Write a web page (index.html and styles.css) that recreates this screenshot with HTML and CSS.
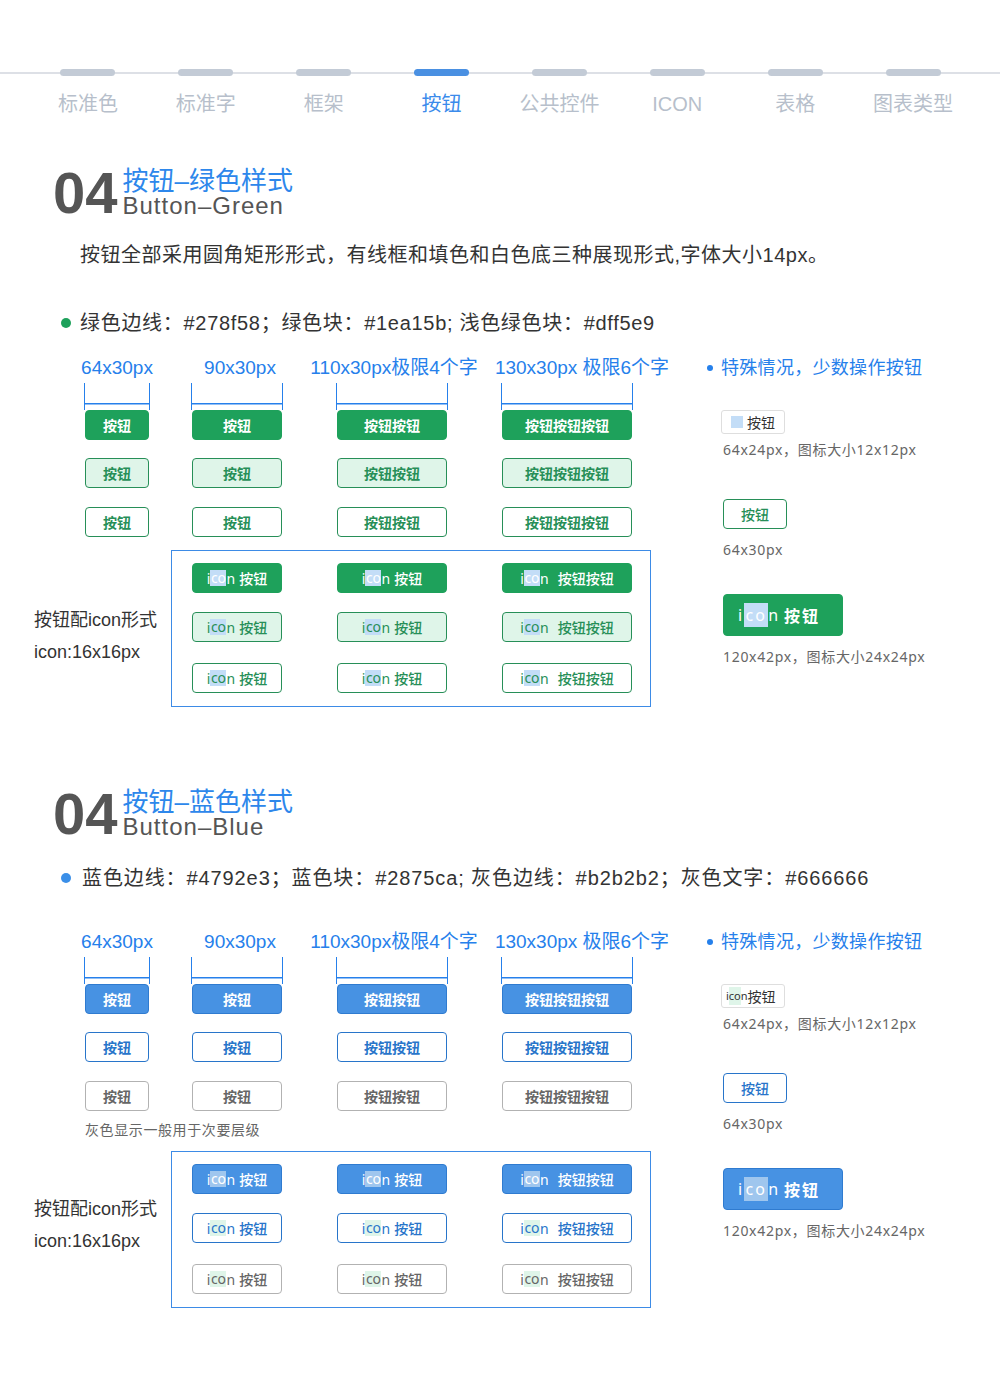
FILE: index.html
```html
<!DOCTYPE html>
<html lang="zh-CN">
<head>
<meta charset="utf-8">
<title>按钮</title>
<link rel="stylesheet" href="styles.css">
</head>
<body>
<div class="topbar">
  <nav class="nav">
    <div class="nav-item"><span class="pill"></span><span class="nav-label">标准色</span></div>
    <div class="nav-item"><span class="pill"></span><span class="nav-label">标准字</span></div>
    <div class="nav-item"><span class="pill"></span><span class="nav-label">框架</span></div>
    <div class="nav-item active"><span class="pill"></span><span class="nav-label">按钮</span></div>
    <div class="nav-item"><span class="pill"></span><span class="nav-label">公共控件</span></div>
    <div class="nav-item"><span class="pill"></span><span class="nav-label">ICON</span></div>
    <div class="nav-item"><span class="pill"></span><span class="nav-label">表格</span></div>
    <div class="nav-item"><span class="pill"></span><span class="nav-label">图表类型</span></div>
  </nav>
</div>

<section class="sec sec-green">
  <header class="sec-head">
    <div class="sec-num">04</div>
    <div class="sec-titles">
      <div class="sec-cn">按钮–绿色样式</div>
      <div class="sec-en">Button–Green</div>
    </div>
  </header>
  <p class="intro">按钮全部采用圆角矩形形式，有线框和填色和白色底三种展现形式,字体大小14px。</p>
  <p class="legend"><span class="dot"></span>绿色边线：#278f58；绿色块：#1ea15b; 浅色绿色块：#dff5e9</p>

  <div class="spec">
    <div class="spec-main">
      <div class="cols">
        <div class="col w64">
          <div class="size-label">64x30px</div>
          <div class="bracket"></div>
          <div class="btn g-fill">按钮</div>
          <div class="btn g-light">按钮</div>
          <div class="btn g-line">按钮</div>
        </div>
        <div class="col w90">
          <div class="size-label shift-s">90x30px</div>
          <div class="bracket"></div>
          <div class="btn g-fill">按钮</div>
          <div class="btn g-light">按钮</div>
          <div class="btn g-line">按钮</div>
        </div>
        <div class="col w110">
          <div class="size-label shift-m">110x30px极限4个字</div>
          <div class="bracket"></div>
          <div class="btn g-fill">按钮按钮</div>
          <div class="btn g-light">按钮按钮</div>
          <div class="btn g-line">按钮按钮</div>
        </div>
        <div class="col w130">
          <div class="size-label shift-l">130x30px 极限6个字</div>
          <div class="bracket"></div>
          <div class="btn g-fill">按钮按钮按钮</div>
          <div class="btn g-light">按钮按钮按钮</div>
          <div class="btn g-line">按钮按钮按钮</div>
        </div>
      </div>

      <div class="icon-row">
        <div class="icon-note note-g">按钮配icon形式<br>icon:16x16px</div>
        <div class="icon-box">
          <div class="irow">
            <div class="btn ibtn g-fill"><span class="iw">i<span class="ico ico-blue">co</span>n</span>按钮</div>
            <div class="btn ibtn g-fill"><span class="iw">i<span class="ico ico-blue">co</span>n</span>按钮</div>
            <div class="btn ibtn g-fill"><span class="iw wide">i<span class="ico ico-blue">co</span>n</span>按钮按钮</div>
          </div>
          <div class="irow">
            <div class="btn ibtn g-light"><span class="iw">i<span class="ico ico-blue">co</span>n</span>按钮</div>
            <div class="btn ibtn g-light"><span class="iw">i<span class="ico ico-blue">co</span>n</span>按钮</div>
            <div class="btn ibtn g-light"><span class="iw wide">i<span class="ico ico-blue">co</span>n</span>按钮按钮</div>
          </div>
          <div class="irow">
            <div class="btn ibtn g-line"><span class="iw">i<span class="ico ico-blue">co</span>n</span>按钮</div>
            <div class="btn ibtn g-line"><span class="iw">i<span class="ico ico-blue">co</span>n</span>按钮</div>
            <div class="btn ibtn g-line"><span class="iw wide">i<span class="ico ico-blue">co</span>n</span>按钮按钮</div>
          </div>
        </div>
      </div>
    </div>

    <aside class="spec-side">
      <div class="side-head"><span class="side-dot"></span>特殊情况，少数操作按钮</div>
      <div class="mini"><span class="mini-sq"></span>按钮</div>
      <div class="side-desc">64x24px，图标大小12x12px</div>
      <div class="btn g-line side-btn">按钮</div>
      <div class="side-desc">64x30px</div>
      <div class="btn g-fill big"><span class="iw">i<span class="ico ico-lg ico-blue">co</span>n</span>按钮</div>
      <div class="side-desc">120x42px，图标大小24x24px</div>
    </aside>
  </div>
</section>

<section class="sec sec-blue">
  <header class="sec-head">
    <div class="sec-num">04</div>
    <div class="sec-titles">
      <div class="sec-cn">按钮–蓝色样式</div>
      <div class="sec-en">Button–Blue</div>
    </div>
  </header>
  <p class="legend"><span class="dot"></span>蓝色边线：#4792e3；蓝色块：#2875ca; 灰色边线：#b2b2b2；灰色文字：#666666</p>

  <div class="spec">
    <div class="spec-main">
      <div class="cols">
        <div class="col w64">
          <div class="size-label">64x30px</div>
          <div class="bracket"></div>
          <div class="btn b-fill">按钮</div>
          <div class="btn b-line">按钮</div>
          <div class="btn gr-line">按钮</div>
        </div>
        <div class="col w90">
          <div class="size-label shift-s">90x30px</div>
          <div class="bracket"></div>
          <div class="btn b-fill">按钮</div>
          <div class="btn b-line">按钮</div>
          <div class="btn gr-line">按钮</div>
        </div>
        <div class="col w110">
          <div class="size-label shift-m">110x30px极限4个字</div>
          <div class="bracket"></div>
          <div class="btn b-fill">按钮按钮</div>
          <div class="btn b-line">按钮按钮</div>
          <div class="btn gr-line">按钮按钮</div>
        </div>
        <div class="col w130">
          <div class="size-label shift-l">130x30px 极限6个字</div>
          <div class="bracket"></div>
          <div class="btn b-fill">按钮按钮按钮</div>
          <div class="btn b-line">按钮按钮按钮</div>
          <div class="btn gr-line">按钮按钮按钮</div>
        </div>
      </div>
      <p class="gray-note">灰色显示一般用于次要层级</p>

      <div class="icon-row">
        <div class="icon-note note-b">按钮配icon形式<br>icon:16x16px</div>
        <div class="icon-box">
          <div class="irow">
            <div class="btn ibtn b-fill"><span class="iw">i<span class="ico ico-dblue">co</span>n</span>按钮</div>
            <div class="btn ibtn b-fill"><span class="iw">i<span class="ico ico-dblue">co</span>n</span>按钮</div>
            <div class="btn ibtn b-fill"><span class="iw wide">i<span class="ico ico-dblue">co</span>n</span>按钮按钮</div>
          </div>
          <div class="irow">
            <div class="btn ibtn b-line"><span class="iw">i<span class="ico ico-green">co</span>n</span>按钮</div>
            <div class="btn ibtn b-line"><span class="iw">i<span class="ico ico-green">co</span>n</span>按钮</div>
            <div class="btn ibtn b-line"><span class="iw wide">i<span class="ico ico-green">co</span>n</span>按钮按钮</div>
          </div>
          <div class="irow">
            <div class="btn ibtn gr-line"><span class="iw">i<span class="ico ico-green">co</span>n</span>按钮</div>
            <div class="btn ibtn gr-line"><span class="iw">i<span class="ico ico-green">co</span>n</span>按钮</div>
            <div class="btn ibtn gr-line"><span class="iw wide">i<span class="ico ico-green">co</span>n</span>按钮按钮</div>
          </div>
        </div>
      </div>
    </div>

    <aside class="spec-side">
      <div class="side-head"><span class="side-dot"></span>特殊情况，少数操作按钮</div>
      <div class="mini"><span class="mini-icon">i<span class="ico-mini">co</span>n</span>按钮</div>
      <div class="side-desc">64x24px，图标大小12x12px</div>
      <div class="btn b-line side-btn">按钮</div>
      <div class="side-desc">64x30px</div>
      <div class="btn b-fill big"><span class="iw">i<span class="ico ico-lg ico-dblue">co</span>n</span>按钮</div>
      <div class="side-desc">120x42px，图标大小24x24px</div>
    </aside>
  </div>
</section>
</body>
</html>
```

FILE: styles.css
```css
* {
  box-sizing: border-box;
  margin: 0;
  padding: 0;
}

body {
  width: 1000px;
  margin: 0;
  background: #fff;
  color: #333;
  font-family: "Liberation Sans", "Noto Sans CJK SC", sans-serif;
}

/* ---------- top nav ---------- */
.topbar {
  padding: 69px 28px 0 29px;
  background: linear-gradient(#dde0e6, #dde0e6) 0 72px / 100% 2px no-repeat;
}

.nav {
  display: grid;
  grid-template-columns: repeat(8, 1fr);
}

.nav-item {
  display: flex;
  flex-direction: column;
  align-items: center;
}

.pill {
  width: 55px;
  height: 7px;
  border-radius: 4px;
  background: #c3cbd6;
}

.nav-label {
  margin-top: 15px;
  font-size: 20px;
  line-height: 26px;
  color: #b7bfcb;
}

.nav-item.active .pill { background: #4a90e2; }
.nav-item.active .nav-label { color: #3b8beb; }

/* ---------- section header ---------- */
.sec-head {
  display: flex;
  align-items: flex-start;
  margin-left: 53px;
}

.sec-green .sec-head { margin-top: 47px; }
.sec-blue .sec-head { margin-top: 78px; }

.sec-num {
  font-size: 58px;
  line-height: 58px;
  font-weight: bold;
  color: #555;
}

.sec-titles {
  margin-left: 5px;
  margin-top: 4px;
}

.sec-cn {
  font-size: 26px;
  line-height: 26px;
  color: #2d87eb;
}

.sec-en {
  font-size: 24px;
  line-height: 24px;
  color: #555;
  letter-spacing: 1px;
}

.intro {
  margin: 19px 0 0 80px;
  font-size: 20px;
  line-height: 28px;
  color: #333;
  letter-spacing: 0.5px;
}

.legend {
  display: flex;
  align-items: center;
  margin: 40px 0 0 61px;
  font-size: 20px;
  line-height: 28px;
  color: #333;
  letter-spacing: 0.7px;
}

.sec-blue .legend {
  margin-top: 21px;
  letter-spacing: 0.9px;
}

.dot {
  width: 10px;
  height: 10px;
  border-radius: 50%;
  margin-right: 9px;
  background: #1ea15b;
}

.sec-blue .dot {
  background: #3b8fe8;
  margin-right: 11px;
}

/* ---------- spec area ---------- */
.spec {
  display: flex;
  margin-top: 19px;
}

.sec-blue .spec { margin-top: 38px; }

.spec-main {
  width: 700px;
  flex: none;
}

.cols {
  display: flex;
  padding-left: 85px;
}

.col {
  display: flex;
  flex-direction: column;
  align-items: center;
  flex: none;
}

.w64 { width: 64px; }
.w90 { width: 90px; margin-left: 43px; }
.w110 { width: 110px; margin-left: 55px; }
.w130 { width: 130px; margin-left: 55px; }

.size-label {
  font-size: 19px;
  line-height: 24px;
  color: #2680eb;
  white-space: nowrap;
}

.shift-s { margin-left: 6px; }
.shift-m { margin-left: 4px; }
.shift-l { margin-left: 30px; }

.bracket {
  align-self: stretch;
  height: 27px;
  margin: 3px -1px 0;
  border-left: 1.5px solid #2680eb;
  border-right: 1.5px solid #2680eb;
  background: linear-gradient(#2680eb, #2680eb) 0 20px / 100% 1.5px no-repeat;
}

/* ---------- buttons ---------- */
.btn {
  display: flex;
  align-items: center;
  justify-content: center;
  height: 30px;
  border: 1px solid transparent;
  border-radius: 4px;
  font-family: "Noto Sans", "Noto Sans CJK SC", sans-serif;
  font-size: 14px;
  font-weight: bold;
  white-space: nowrap;
}

.col .btn { align-self: stretch; }
.col .btn + .btn { margin-top: 18px; }
.col .btn:last-child { margin-top: 19px; }

.g-fill { background: #1ea15b; border-color: #1ea15b; color: #fff; }
.g-light { background: #dff5e9; border-color: #278f58; color: #278f58; }
.g-line { background: #fff; border-color: #278f58; color: #278f58; }

.b-fill { background: #4792e3; border-color: #2f7bd0; color: #fff; }
.b-line { background: #fff; border-color: #2875ca; color: #2875ca; }
.gr-line { background: #fff; border-color: #b2b2b2; color: #666; }

.gray-note {
  margin: 9px 0 0 85px;
  font-size: 14px;
  line-height: 20px;
  color: #666;
  letter-spacing: 0.6px;
}

/* ---------- icon buttons ---------- */
.icon-row {
  display: flex;
  margin-top: 13px;
}

.sec-blue .icon-row { margin-top: 11px; }

.icon-note {
  width: 171px;
  flex: none;
  padding-left: 34px;
  font-size: 18px;
  line-height: 32px;
  color: #333;
}

.note-g { margin-top: 54px; }
.note-b { margin-top: 42px; }

.icon-box {
  width: 480px;
  border: 1px solid #3d8be6;
  padding: 12px 0 13px 20px;
}

.irow { display: flex; }
.irow + .irow { margin-top: 19px; }
.irow:last-child { margin-top: 21px; }

.irow .btn:nth-child(1) { width: 90px; }
.irow .btn:nth-child(2) { width: 110px; margin-left: 55px; }
.irow .btn:nth-child(3) { width: 130px; margin-left: 55px; }

.ibtn { font-weight: 500; }

.iw {
  display: inline-flex;
  align-items: center;
  margin-right: 4px;
  font-weight: normal;
}

.iw.wide { margin-right: 9px; }

.ico {
  display: inline-block;
  min-width: 16px;
  height: 16px;
  line-height: 16px;
  text-align: center;
}

.ico-blue { background: #c3ddf7; }
.ico-dblue { background: #9fc6ee; }
.ico-green { background: #dff5e9; }

/* ---------- side column ---------- */
.spec-side {
  padding-left: 7px;
}

.side-head {
  display: flex;
  align-items: center;
  font-size: 18px;
  line-height: 24px;
  color: #2680eb;
  white-space: nowrap;
  letter-spacing: 0.3px;
}

.side-dot {
  width: 6px;
  height: 6px;
  border-radius: 50%;
  background: #2680eb;
  margin-right: 8px;
}

.mini {
  display: flex;
  align-items: center;
  width: 64px;
  height: 24px;
  margin: 30px 0 0 14px;
  padding-left: 9px;
  border: 1px solid #dedede;
  border-radius: 3px;
  font-family: "Noto Sans", "Noto Sans CJK SC", sans-serif;
  font-size: 14px;
  color: #333;
}

.mini-sq {
  width: 12px;
  height: 12px;
  background: #c3ddf7;
  margin-right: 4px;
}

.mini-icon {
  font-size: 11px;
  margin-left: -5px;
}

.ico-mini {
  display: inline-block;
  background: #dff5e9;
  line-height: 18px;
}

.side-desc {
  margin: 11px 0 0 16px;
  font-family: "Noto Sans", "Noto Sans CJK SC", sans-serif;
  font-size: 14px;
  line-height: 20px;
  color: #666;
  letter-spacing: 0.7px;
  white-space: nowrap;
}

.mini + .side-desc { margin-top: 6px; }

.side-btn {
  width: 64px;
  margin: 39px 0 0 16px;
  font-weight: 500;
}

.big {
  width: 120px;
  height: 42px;
  margin: 34px 0 0 16px;
  padding-left: 14px;
  justify-content: flex-start;
  font-size: 16px;
  letter-spacing: 2px;
  font-weight: 600;
}

.big .iw { margin-right: 4px; }

.ico-lg {
  width: 24px;
  height: 24px;
  line-height: 24px;
}
```
